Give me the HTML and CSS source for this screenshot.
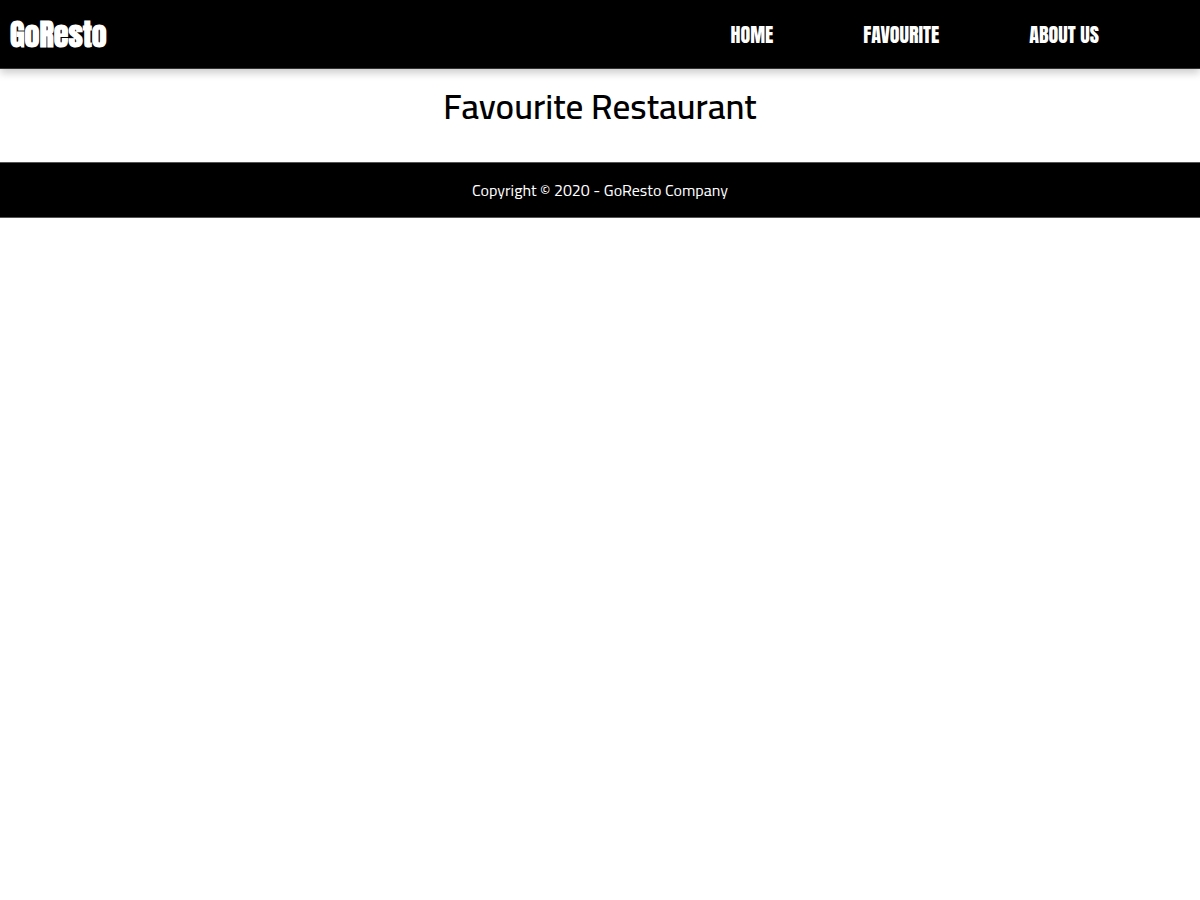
FILE: index.html
```html
<!DOCTYPE html>
<html lang="en">
<head>
<meta charset="utf-8">
<meta name="viewport" content="width=device-width, initial-scale=1">
<title>GoResto</title>
<link rel="stylesheet" href="styles.css">
</head>
<body>
<header class="header">
  <a class="brand" href="#">GoResto</a>
  <nav aria-label="Main">
    <ul class="nav-list">
      <li><a class="nav-link" href="#">HOME</a></li>
      <li><a class="nav-link" href="#">FAVOURITE</a></li>
      <li><a class="nav-link" href="#">ABOUT US</a></li>
    </ul>
  </nav>
</header>
<main class="main">
  <h1 class="title">Favourite Restaurant</h1>
</main>
<footer class="footer">
  <p class="copyright">Copyright © 2020 - GoResto Company</p>
</footer>
</body>
</html>
```

FILE: styles.css
```css
* {
  box-sizing: border-box;
}

body {
  margin: 0;
  background: #fff;
  color: #000;
  font-family: Cairo, "Titillium Web", "Noto Sans", sans-serif;
}

.header {
  display: flex;
  flex-wrap: wrap;
  align-items: center;
  justify-content: space-between;
  min-height: 69px;
  padding: 1px 101px 0 10px;
  background: #000;
  border-bottom: 1px solid #333;
  box-shadow: 0 4px 8px rgba(0, 0, 0, 0.2);
  font-family: Anton, Impact, "Liberation Sans Narrow", "Roboto Condensed", "Liberation Sans", sans-serif;
}

.brand {
  color: #fff;
  font-size: 30px;
  font-weight: 700;
  line-height: 48px;
  text-decoration: none;
}

.nav-list {
  display: flex;
  flex-wrap: wrap;
  gap: 0 90px;
  margin: 0;
  padding: 0;
  list-style: none;
}

.nav-link {
  color: #fff;
  font-size: 20px;
  line-height: 32px;
  text-decoration: none;
}

.main {
  padding: 10px 16px 28px;
}

.title {
  margin: 0;
  font-size: 35px;
  font-weight: 600;
  line-height: 55px;
  text-align: center;
}

.footer {
  padding: 13px 16px;
  background: #000;
  border: solid #555;
  border-width: 1px 0;
  color: #fff;
}

.copyright {
  margin: 0;
  font-size: 16px;
  line-height: 28px;
  text-align: center;
}
```
